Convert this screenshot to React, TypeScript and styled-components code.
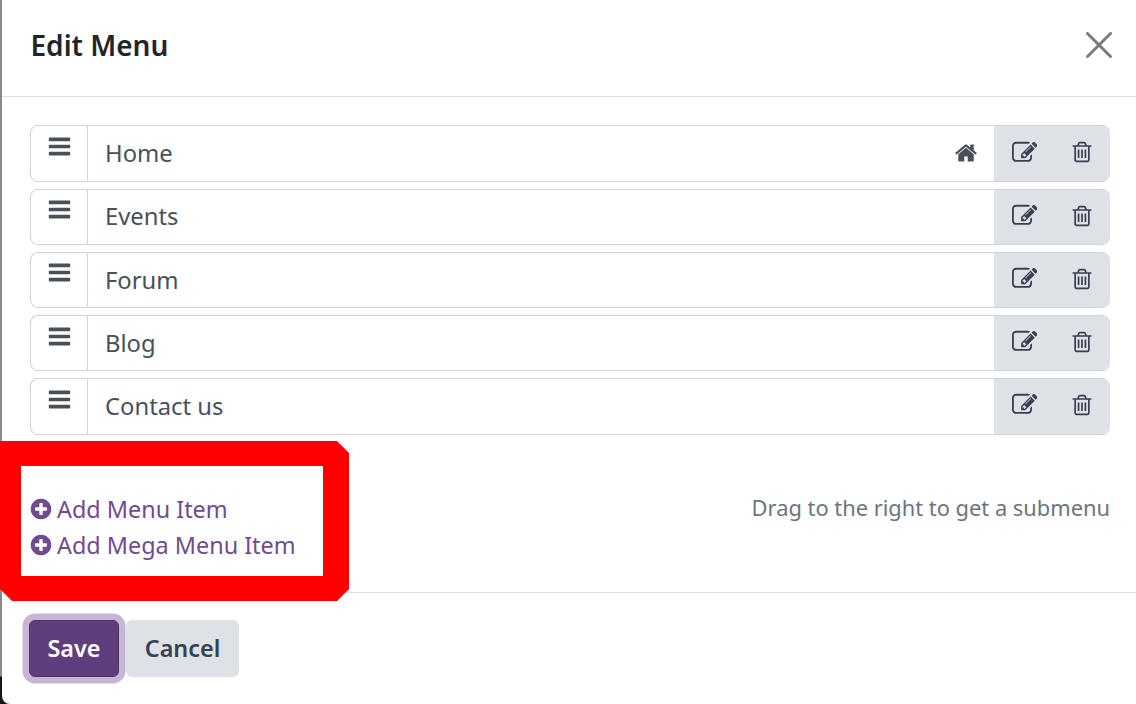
import React from "react";
import styled, { createGlobalStyle } from "styled-components";

// Font Awesome 4 glyphs, the v5 ones in react-icons are too thin here
const paths = {
  bars: "M1664 1344v128q0 26-19 45t-45 19h-1408q-26 0-45-19t-19-45v-128q0-26 19-45t45-19h1408q26 0 45 19t19 45zm0-512v128q0 26-19 45t-45 19h-1408q-26 0-45-19t-19-45v-128q0-26 19-45t45-19h1408q26 0 45 19t19 45zm0-512v128q0 26-19 45t-45 19h-1408q-26 0-45-19t-19-45v-128q0-26 19-45t45-19h1408q26 0 45 19t19 45z",
  home: "M1472 992v480q0 26-19 45t-45 19h-384v-384h-256v384h-384q-26 0-45-19t-19-45v-480q0-1 .5-3t.5-3l575-474 575 474q1 2 1 6zm223-69l-62 74q-8 9-21 11h-3q-13 0-21-7l-692-577-692 577q-12 8-24 7-13-2-21-11l-62-74q-8-10-7-23.5t11-21.5l719-599q32-26 76-26t76 26l244 204v-195q0-14 9-23t23-9h192q14 0 23 9t9 23v408l219 182q10 8 11 21.5t-7 23.5z",
  edit: "M888 1184l116-116-152-152-116 116v56h96v96h56zm440-720q-16-16-33 1l-350 350q-17 17-1 33t33-1l350-350q17-17 1-33zm80 594v190q0 119-84.5 203.5t-203.5 84.5h-832q-119 0-203.5-84.5t-84.5-203.5v-832q0-119 84.5-203.5t203.5-84.5h832q63 0 117 25 15 7 18 23 3 17-9 29l-49 49q-14 14-32 8-23-6-45-6h-832q-66 0-113 47t-47 113v832q0 66 47 113t113 47h832q66 0 113-47t47-113v-126q0-13 9-22l64-64q15-15 35-7t20 29zm-96-738l288 288-672 672h-288v-288zm444 132l-92 92-288-288 92-92q28-28 68-28t68 28l152 152q28 28 28 68t-28 68z",
  trash: "M704 736v576q0 14-9 23t-23 9h-64q-14 0-23-9t-9-23v-576q0-14 9-23t23-9h64q14 0 23 9t9 23zm256 0v576q0 14-9 23t-23 9h-64q-14 0-23-9t-9-23v-576q0-14 9-23t23-9h64q14 0 23 9t9 23zm256 0v576q0 14-9 23t-23 9h-64q-14 0-23-9t-9-23v-576q0-14 9-23t23-9h64q14 0 23 9t9 23zm128 724v-948h-896v948q0 22 7 40.5t14.5 27 10.5 8.5h832q3 0 10.5-8.5t14.5-27 7-40.5zm-672-1076h448l-48-117q-7-9-17-11h-317q-10 2-17 11zm928 32v64q0 14-9 23t-23 9h-96v948q0 83-47 143.5t-113 60.5h-832q-66 0-113-58.5t-47-141.5v-952h-96q-14 0-23-9t-9-23v-64q0-14 9-23t23-9h309l70-167q15-37 54-63t79-26h320q40 0 79 26t54 63l70 167h309q14 0 23 9t9 23z",
  plus: "M1344 960v-128q0-26-19-45t-45-19h-256v-256q0-26-19-45t-45-19h-128q-26 0-45 19t-19 45v256h-256q-26 0-45 19t-19 45v128q0 26 19 45t45 19h256v256q0 26 19 45t45 19h128q26 0 45-19t19-45v-256h256q26 0 45-19t19-45zm320-64q0 209-103 385.5t-279.5 279.5-385.5 103-385.5-103-279.5-279.5-103-385.5 103-385.5 279.5-279.5 385.5-103 385.5 103 279.5 279.5 103 385.5z",
};

const items = ["Home", "Events", "Forum", "Blog", "Contact us"];

export default function App() {
  return (
    <>
      <GlobalStyle />
      <Modal>
        <Header>
          <Title>Edit Menu</Title>
          <CloseIcon viewBox="0 0 26 26" aria-hidden="true">
            <path d="M1.5 1.5 24.5 24.5M24.5 1.5 1.5 24.5" />
          </CloseIcon>
        </Header>
        <Body>
          <MenuList>
            {items.map((item) => (
              <Row key={item}>
                <Handle>
                  <Glyph $size={25} viewBox="0 0 1792 1792">
                    <path d={paths.bars} />
                  </Glyph>
                </Handle>
                <Label>
                  <span>{item}</span>
                  {item === "Home" && (
                    <Glyph $size={24} viewBox="0 0 1792 1792">
                      <path d={paths.home} />
                    </Glyph>
                  )}
                </Label>
                <Actions>
                  <Glyph $size={25.5} viewBox="0 0 1792 1792">
                    <path d={paths.edit} />
                  </Glyph>
                  <Glyph $size={24} viewBox="0 0 1792 1792">
                    <path d={paths.trash} />
                  </Glyph>
                </Actions>
              </Row>
            ))}
          </MenuList>
          <AddSection>
            <AddLinks>
              <AddLink>
                <Glyph $size={24} viewBox="0 0 1792 1792">
                  <path d={paths.plus} />
                </Glyph>
                Add Menu Item
              </AddLink>
              <AddLink>
                <Glyph $size={24} viewBox="0 0 1792 1792">
                  <path d={paths.plus} />
                </Glyph>
                Add Mega Menu Item
              </AddLink>
            </AddLinks>
            <Hint>Drag to the right to get a submenu</Hint>
          </AddSection>
          <Highlight />
        </Body>
        <Footer>
          <SaveButton>Save</SaveButton>
          <CancelButton>Cancel</CancelButton>
        </Footer>
      </Modal>
    </>
  );
}

const GlobalStyle = createGlobalStyle`
  html, body {
    margin: 0;
    height: 704px;
    overflow: hidden;
    background: linear-gradient(#8a8a8a 0, #8a8a8a 676px, #14141c 677px);
  }
  body {
    font-family: "Noto Sans", "Open Sans", sans-serif;
  }
`;

const Modal = styled.div`
  box-sizing: border-box;
  width: 1134px;
  height: 704px;
  margin-left: 2px;
  background: #fff;
  border-bottom-left-radius: 8px;
  display: flex;
  flex-direction: column;
`;

const Header = styled.header`
  box-sizing: border-box;
  height: 97px;
  flex: none;
  display: flex;
  align-items: center;
  justify-content: space-between;
  padding: 0 24px 6px 28.5px;
  border-bottom: 1px solid #dee2e6;
`;

const Title = styled.h1`
  margin: 0;
  font-size: 28px;
  font-weight: 600;
  color: #212529;
`;

const CloseIcon = styled.svg`
  width: 26px;
  height: 26px;
  fill: none;
  stroke: #7c7c7c;
  stroke-width: 3;
  stroke-linecap: round;
`;

const Glyph = styled.svg<{ $size: number }>`
  width: ${(p) => p.$size}px;
  height: ${(p) => p.$size}px;
  flex: none;
  fill: currentColor;
`;

const Body = styled.main`
  position: relative;
  flex: 1;
  padding: 28.4px 26px 0 28px;
`;

const MenuList = styled.div`
  display: flex;
  flex-direction: column;
  gap: 6.95px;
`;

const Row = styled.div`
  box-sizing: border-box;
  height: 56.3px;
  display: flex;
  border-radius: 8px;
  overflow: hidden;
  border: 1px solid #ced4da;
  border-right: 0;
`;

const Handle = styled.div`
  box-sizing: border-box;
  width: 57px;
  flex: none;
  padding-top: 7.5px;
  display: flex;
  justify-content: center;
  align-items: flex-start;
  color: #495057;
  border-right: 1px solid #ced4da;
`;

const Label = styled.div`
  flex: 1;
  display: flex;
  align-items: center;
  justify-content: space-between;
  padding: 0 16px 1px 17px;
  font-size: 23.8px;
  color: #495057;
`;

const Actions = styled.div`
  box-sizing: border-box;
  width: 116px;
  flex: none;
  margin: -1px 0;
  display: flex;
  align-items: center;
  justify-content: space-between;
  padding: 0 15.7px 2.5px 17.5px;
  background: #dee2e6;
  color: #374151;
`;

const AddSection = styled.div`
  margin-top: 57.5px;
  display: flex;
  justify-content: space-between;
  align-items: center;
`;

const AddLinks = styled.div`
  display: flex;
  flex-direction: column;
  gap: 3px;
`;

const AddLink = styled.a`
  display: flex;
  align-items: center;
  gap: 4.5px;
  height: 33px;
  font-size: 23.4px;
  color: #714b8f;

  svg {
    margin-left: -1.5px;
  }
`;

const Hint = styled.span`
  font-size: 21.85px;
  color: #6c757d;
  margin-top: -38px;
`;

const Highlight = styled.div`
  position: absolute;
  box-sizing: content-box;
  left: -2px;
  top: 344px;
  width: 302px;
  height: 110px;
  border-style: solid;
  border-color: #ff0000;
  border-width: 25px 26px 25px 21px;
  clip-path: polygon(
    0 0,
    337px 0,
    349px 12px,
    349px 148px,
    337px 160px,
    12px 160px,
    0 148px
  );
`;

const Footer = styled.footer`
  box-sizing: border-box;
  height: 112px;
  flex: none;
  display: flex;
  gap: 7px;
  padding: 27px 0 0 27px;
  align-items: flex-start;
  border-top: 1px solid #dee2e6;
`;

const BaseButton = styled.button`
  box-sizing: border-box;
  height: 57px;
  border-radius: 6px;
  border: 1px solid transparent;
  font-family: inherit;
  font-size: 23.4px;
  font-weight: 600;
  padding: 0 0 2px;
`;

const SaveButton = styled(BaseButton)`
  width: 90px;
  background: #5f3e7e;
  border-color: #4c3265;
  color: #fff;
  box-shadow: 0 0 0 6.5px #c7b5d6;
`;

const CancelButton = styled(BaseButton)`
  width: 113px;
  background: #dee2e6;
  color: #374151;
`;
